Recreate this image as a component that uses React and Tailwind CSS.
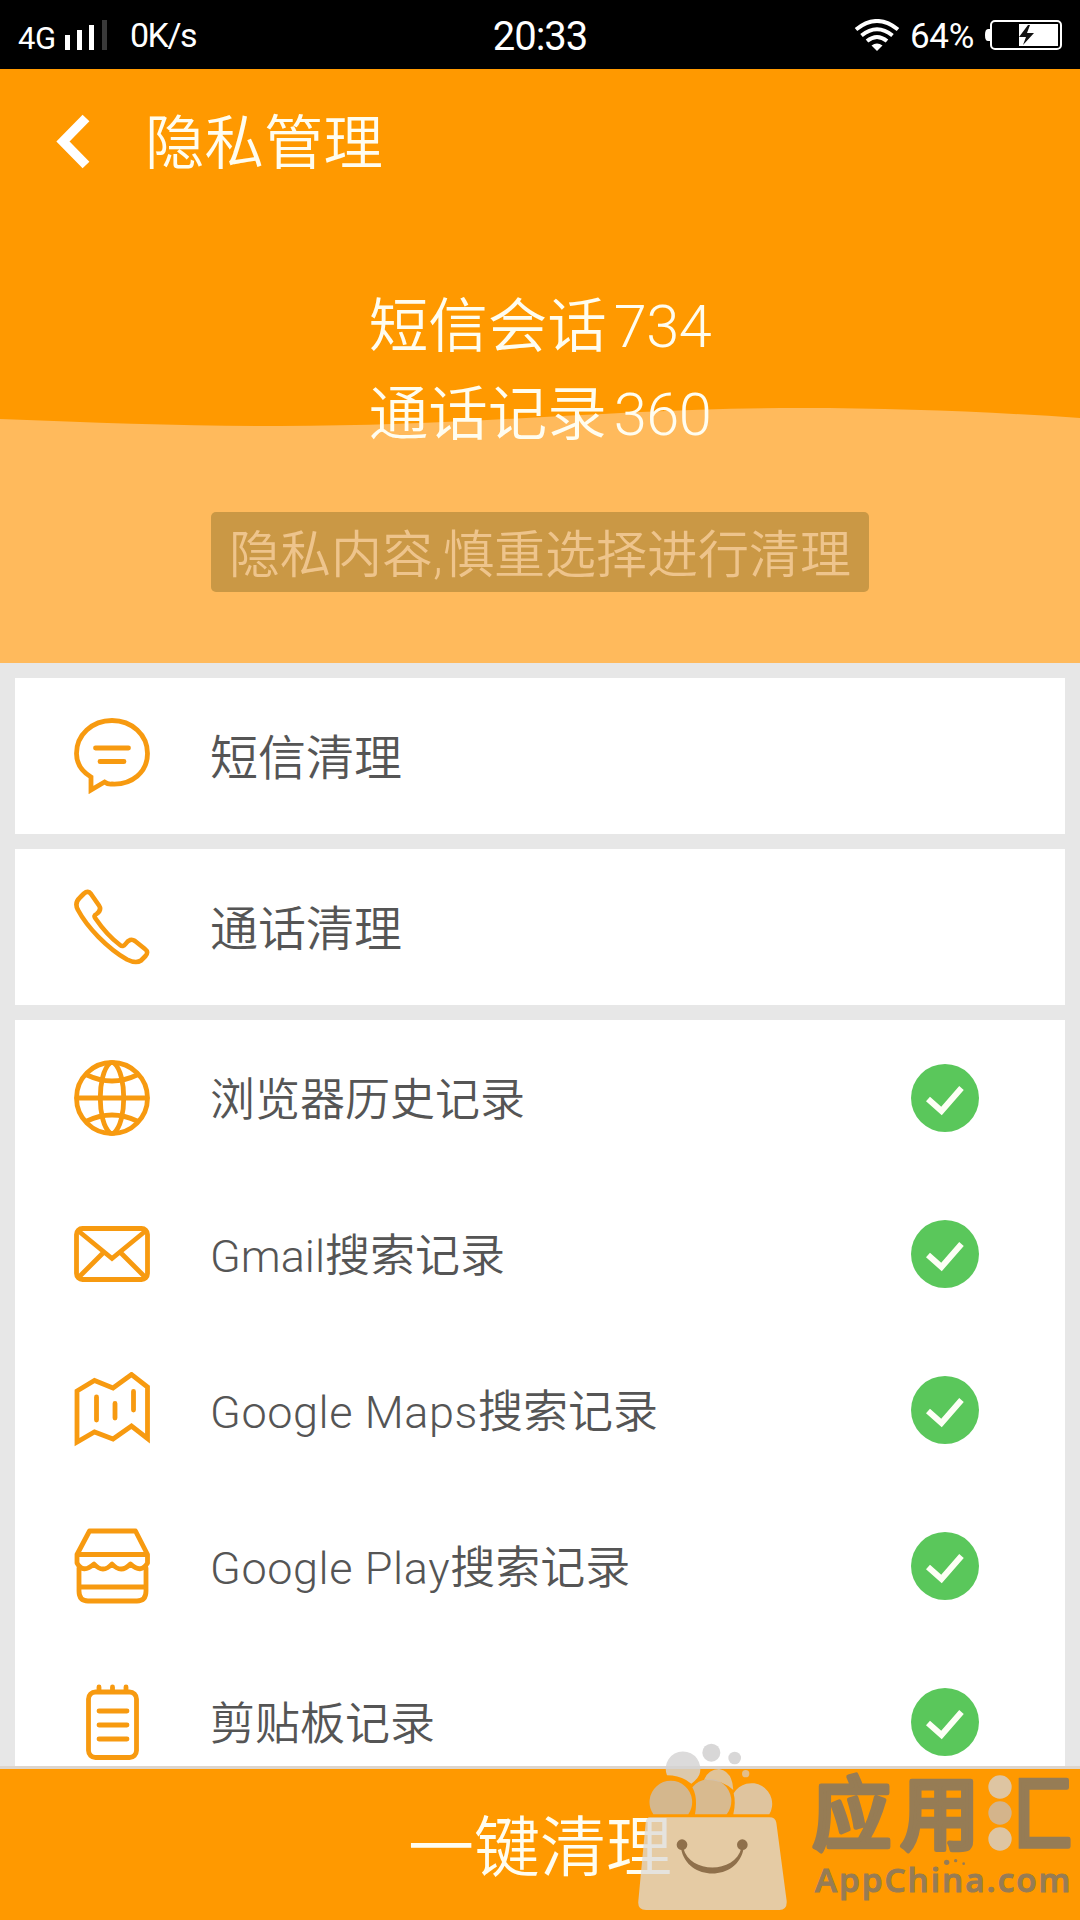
import React from "react";

const ORANGE = "#f79a10";

function Svg({ children }) {
  return (
    <svg
      className="block h-[76px] w-[76px] shrink-0"
      viewBox="0 0 76 76"
      fill="none"
      stroke={ORANGE}
      strokeWidth="4.8"
      strokeLinecap="round"
    >
      {children}
    </svg>
  );
}

const MessageIcon = () => (
  <Svg>
    <path d="M17 59C7 53 2.500 45 2.500 35.500C2.500 17 18 2.500 38 2.500S73.500 17 73.500 35.500C73.500 54 58 67 38 66Q34 66.500 30.500 64L17 72Z" strokeLinecap="butt" strokeLinejoin="miter" />
    <path d="M21.500 30H54.500M26 43.500H50" />
  </Svg>
);

const PhoneIcon = () => (
  <Svg>
    <path
      d="M10 4.500Q14 1 17 5L25 16.500Q28 21 22.500 25Q19 26.500 21.500 29.500C28 39 38 50 46 56Q49 58.500 51.500 55Q56 48.500 61 52L71 60Q75 63 71.500 67L67 71.500Q62 75 53 70.500C33 59 13 38 4 21Q0 14 6 8.500Z"
      strokeLinejoin="round"
      strokeWidth="4.600"
    />
  </Svg>
);

const GlobeIcon = () => (
  <Svg>
    <circle cx="38" cy="38" r="35.500" />
    <path d="M3 38H73M36 3C23 14 23 62 36 73M40 3C53 14 53 62 40 73" />
    <path d="M13 15Q38 27 63 15M13 61Q38 49 63 61" />
  </Svg>
);

const MailIcon = () => (
  <Svg>
    <rect x="2.500" y="12.500" width="71" height="51" rx="6" />
    <path d="M4.500 15L38 42.500L71.500 15M5 61L29 37M71 61L47 37" />
  </Svg>
);

const MapIcon = () => (
  <Svg>
    <path d="M3 19L20.500 8.500L39 16L57.500 2.500L73.500 15V66.500L57.500 54L39 67L20.500 60L3 70Z" strokeLinecap="butt" />
    <path d="M22.500 25V48M41 31.500V46M59.500 19.500V38" />
  </Svg>
);

const StoreIcon = () => (
  <Svg>
    <path d="M3 26.500H73.500M3 26.500L15.500 3H61.500L73.500 26.500V35Q67 46 56.500 36Q47 46 38 36Q29 46 20 36Q9 46 3 35Z" strokeLinejoin="round" strokeLinecap="butt" />
    <path d="M5 40V63Q5 73 14 73H63Q72 73 72 63V40M5 59H72" />
  </Svg>
);

const ClipboardIcon = () => (
  <Svg>
    <rect x="14.500" y="8" width="48" height="65.500" rx="7" />
    <path d="M25 3V7M38.500 3V7M52 3V7M25 27H53M25 41H53M25 55H53" />
  </Svg>
);

const Check = () => (
  <svg className="block h-[68px] w-[68px] shrink-0" viewBox="0 0 68 68">
    <circle cx="34" cy="34" r="34" fill="#5ac75b" />
    <path d="M17 35L30.500 47L50.500 24" fill="none" stroke="#fdfff5" strokeWidth="6" />
  </svg>
);

function Row({ icon: Icon, children, checked, size = "text-[45px]" }) {
  return (
    <div className="flex h-[156px] shrink-0 items-center bg-white pl-[59px] pr-[86px]">
      <Icon />
      <span className={`ml-[60px] flex-1 whitespace-nowrap pt-[5px] leading-none ${size}`}>{children}</span>
      {checked && <Check />}
    </div>
  );
}

const history = [
  [GlobeIcon, "", "浏览器历史记录"],
  [MailIcon, "Gmail", "搜索记录"],
  [MapIcon, "Google Maps", "搜索记录"],
  [StoreIcon, "Google Play", "搜索记录"],
  [ClipboardIcon, "", "剪贴板记录"],
];

function StatusBar() {
  return (
    <div className="grid h-[69px] shrink-0 grid-cols-3 items-center bg-black px-[18px] font-[Roboto] font-normal leading-none text-white">
      <div className="flex items-center">
        <span className="mt-[7px] w-[47px] text-[31px] tracking-[-0.5px]">4G</span>
        <svg className="h-[32px] w-[42px]" viewBox="0 0 42 32" fill="#fff">
          <path d="M0 16h5v15H0zM12 11h5v20h-5zM24 6h5v25h-5z" />
          <path d="M37 1h5v30h-5z" fill="#3a3a3a" />
        </svg>
        <span className="ml-[23px] text-[34px] tracking-[-1.5px]">0K/s</span>
      </div>
      <div className="mt-[4px] text-center text-[40px] tracking-[-1px]">20:33</div>
      <div className="flex items-center justify-end">
        <svg className="h-[32px] w-[46px]" viewBox="0 0 46 32" fill="none" stroke="#fff" strokeWidth="4">
          <path d="M2 10.500Q23-6.500 44 10.500M7.500 16.500Q23 4 38.500 16.500M13 22Q23 14 33 22" />
          <path d="M17.500 26.500Q23 22.500 28.500 26.500L23 32Z" fill="#fff" stroke="none" />
        </svg>
        <span className="ml-[10px] mt-[3px] w-[68px] whitespace-nowrap text-[35px] tracking-[-0.3px]">64%</span>
        <svg className="ml-[7px] h-[32px] w-[77px]" viewBox="0 0 77 32">
          <path d="M5 10H3Q0 10 0 16T3 22H5Z" fill="#fff" />
          <rect x="6" y="2" width="70" height="28" rx="4" fill="none" stroke="#fff" strokeWidth="2" />
          <path d="M34 5H73V27H34Z" fill="#fff" />
          <path d="M43 6L34 18H41L38 26L49 14H42L45 6Z" fill="#111" />
        </svg>
      </div>
    </div>
  );
}

function Watermark() {
  return (
    <svg className="absolute bottom-0 right-0 h-[220px] w-[480px]" viewBox="0 0 1440 660">
      <defs>
        <clipPath id="boxPart">
          <rect x="1256" y="180" width="180" height="300" />
        </clipPath>
      </defs>
      <g fill="#d4d3d3">
        <circle cx="334" cy="158" r="27" fillOpacity=".9" />
        <circle cx="404" cy="174" r="19" fillOpacity=".9" />
        <circle cx="437" cy="221" r="11" fillOpacity=".65" />
        <path d="M201 226A52 52 0 1 1 298 224Q290 240 274 251Q245 226 201 226Z" fillOpacity=".82" />
        <path d="M312 239Q326 207 357 207Q397 213 400 270Q366 238 312 239Z" fillOpacity=".72" />
        <path d="M160 343A64 64 0 1 1 265 343Z" fillOpacity=".82" fill="#cbbdac" />
        <path d="M285 343Q294 292 277 262A62 62 0 0 1 380 343Z" fillOpacity=".82" fill="#cfc1ae" />
        <path d="M400 343Q408 309 401 280A62 62 0 0 1 508 343Z" fillOpacity=".75" />
      </g>
      <path d="M150 352H508Q526 352 529 368L560 603Q562 630 538 630H138Q112 630 115 603L137 368Q139 352 150 352Z" fill="#dddad8" fillOpacity=".76" />
      <g fill="#8f704b">
        <circle cx="246" cy="434" r="16" />
        <circle cx="427" cy="434" r="16" />
        <path d="M243 445C260 546 414 546 431 445L424 445C404 522 270 522 250 445Z" />
      </g>
      <g fill="#967c55">
        <g stroke="#967c55" strokeWidth="14" strokeLinejoin="round" className="font-['Noto_Sans_CJK_SC'] text-[238px] font-medium">
          <text x="636" y="428">应</text>
          <text x="900" y="428">用</text>
          <text x="1177" y="428" clipPath="url(#boxPart)">汇</text>
        </g>
        <text x="645" y="575" textLength="766" className="font-['Open_Sans'] text-[100px] font-semibold" stroke="#967c55" strokeWidth="3">AppChina.com</text>
        <circle cx="1040" cy="487" r="8" />
        <circle cx="1067" cy="482" r="5" />
        <circle cx="1091" cy="491" r="4" />
      </g>
      <circle cx="1200" cy="261" r="35" fill="#dec5a2" />
      <circle cx="1200" cy="339" r="35" fill="#d4b48b" />
      <circle cx="1200" cy="417" r="35" fill="#dec5a2" />
    </svg>
  );
}

export default function App() {
  return (
    <div className="relative flex h-[1920px] w-[1080px] flex-col overflow-hidden bg-[#e7e7e7] font-[Roboto,'Noto_Sans_CJK_SC',sans-serif] font-[350] text-[#555]">
      <StatusBar />
      <header className="relative flex h-[594px] shrink-0 flex-col bg-[#ff9900] text-[#fffdf0]">
        <svg className="absolute bottom-0 left-0 h-[260px] w-full" viewBox="0 0 1080 260">
          <path d="M0 16C100 20 190 23 280 23C470 23 620 5 800 5C900 5 990 9 1080 15V260H0Z" fill="#ffba5c" />
        </svg>
        <div className="relative flex h-[146px] items-center pl-[56px] leading-none">
          <svg className="h-[56px] w-[34px]" viewBox="0 0 34 56">
            <path d="M30 4L7 27.500L30 51" fill="none" stroke="#fff" strokeWidth="9.500" />
          </svg>
          <h1 className="ml-[55px] pt-[5px] text-[59.500px]">隐私管理</h1>
        </div>
        <div className="relative mt-[68px] text-center text-[59.500px] leading-[88px]">
          <p>短信会话<span className="ml-[7px] font-light tracking-[-0.5px]">734</span></p>
          <p>通话记录<span className="ml-[7px] font-light tracking-[-0.5px]">360</span></p>
        </div>
        <div className="relative mx-auto mt-[53px] flex h-[80px] w-[658px] items-center justify-center whitespace-nowrap rounded-[5px] bg-[#ca9845] pt-[6px] text-[51px] leading-none text-[#eec48c]">
          隐私内容,慎重选择进行清理
        </div>
      </header>
      <main className="flex min-h-0 flex-1 flex-col gap-[15px] overflow-hidden px-[15px] pt-[15px]">
        <Row icon={MessageIcon} size="text-[48px]">短信清理</Row>
        <Row icon={PhoneIcon} size="text-[48px]">通话清理</Row>
        <section className="flex flex-col">
          {history.map(([icon, latin, label]) => (
            <Row key={latin + label} icon={icon} checked>
              <span className={latin.includes(" ") ? "font-light tracking-[0.6px]" : "font-light"}>{latin}</span>
              {label}
            </Row>
          ))}
        </section>
      </main>
      <footer className="flex h-[154px] shrink-0 items-center justify-center border-t-[3px] border-[#ddd5cc] bg-[#ff9900] pt-[8px] text-[66px] leading-none text-[#fffdf0]">
        一键清理
      </footer>
      <Watermark />
    </div>
  );
}
